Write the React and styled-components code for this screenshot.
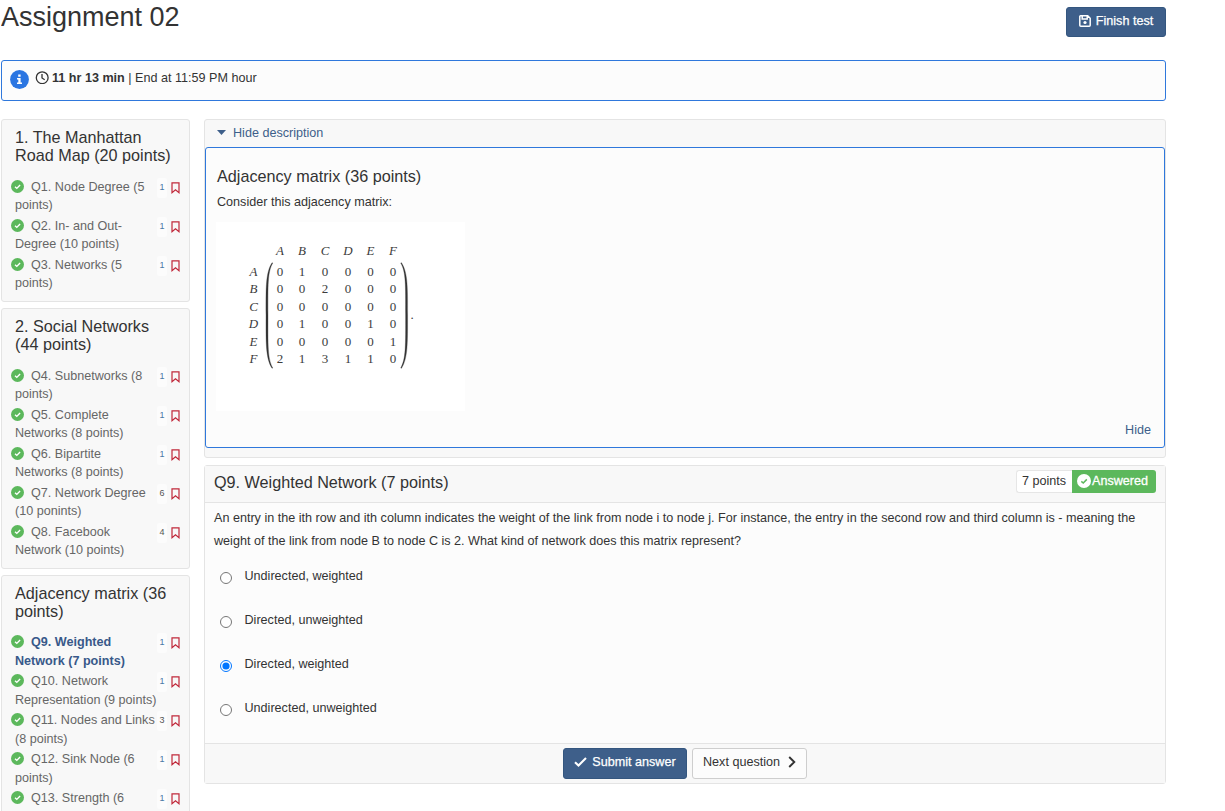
import React, { useState } from "react";
import styled, { createGlobalStyle, css } from "styled-components";

const GlobalStyle = createGlobalStyle`
  * { box-sizing: border-box; }
  body {
    margin: 0;
    background: #fff;
    color: #333;
    font: 12.6px/18px "Liberation Sans", Arial, sans-serif;
    overflow: hidden;
  }
  h1, h2, h3, p, ul { margin: 0; padding: 0; font-weight: 400; }
`;

const Page = styled.div`
  width: 1165px;
  height: 811px;
  margin-left: 1px;
  overflow: hidden;
`;

const Header = styled.header`
  display: flex;
  justify-content: space-between;
  align-items: flex-start;
  height: 60px;
`;

const PageTitle = styled.h1`
  padding-top: 2px;
  font-size: 27px;
  line-height: 30px;
`;

const Button = styled.button`
  display: flex;
  align-items: center;
  justify-content: center;
  width: ${(p) => p.$width}px;
  height: ${(p) => p.$height}px;
  padding: 0 0 3px;
  gap: ${(p) => p.$gap}px;
  border: 1px solid #cecece;
  border-radius: 3px;
  background: #fcfcfc;
  color: #333;
  font: inherit;
  white-space: nowrap;
  ${(p) =>
    p.$primary &&
    css`
      border-color: #34567f;
      background: #3e5f8a;
      color: #fff;
      -webkit-text-stroke: 0.25px #fff;
    `}
`;

const FinishSlot = styled.div`
  padding-top: 7px;
`;

const Notice = styled.div`
  display: flex;
  align-items: flex-start;
  height: 41px;
  padding: 9px 8px;
  border: 1px solid #2f78dc;
  border-radius: 3px;
  background: #fcfcfc;
`;

const ClockIcon = styled.svg`
  width: 14px;
  height: 14px;
  margin-left: 6px;
`;

const NoticeText = styled.span`
  margin: -1px 0 0 3px;
`;

const Columns = styled.div`
  display: grid;
  grid-template-columns: 189px 962px;
  column-gap: 14px;
  align-items: start;
  margin-top: 18px;
`;

const Sidebar = styled.aside`
  display: flex;
  flex-direction: column;
  gap: 6px;
`;

const SectionCard = styled.section`
  height: ${(p) => p.$height}px;
  padding: 8px 8px 0 13px;
  border: 1px solid #e4e4e4;
  border-radius: 3px;
  background: #f8f8f8;
`;

const SectionTitle = styled.h2`
  height: ${(p) => p.$height}px;
  font-size: 16.2px;
  line-height: 18px;
  white-space: nowrap;
`;

const QuestionRow = styled.div`
  display: flex;
  height: 39px;
`;

const QuestionLink = styled.a`
  width: 142px;
  white-space: nowrap;
  color: #666;
  line-height: ${(p) => p.$line}px;
  ${(p) =>
    p.$current &&
    css`
      color: #38598a;
      font-weight: 700;
    `}
`;

const StatusIcon = styled.svg`
  width: 13px;
  height: 13px;
  margin: 0 7px 0 -4px;
  vertical-align: -2px;
`;

const Count = styled.span`
  width: 10px;
  height: 20px;
  border-radius: 2px;
  background: #fcfcfc;
  color: ${(p) => (p.$single ? "#4878a6" : "#555")};
  font-size: 9px;
  line-height: 19px;
  text-align: center;
`;

const FlagIcon = styled.svg`
  width: 9px;
  height: 12px;
  margin: 4px 0 0 4px;
`;

const Main = styled.main`
  display: flex;
  flex-direction: column;
  gap: 7px;
`;

const DescriptionCard = styled.section`
  height: 339px;
  border: 1px solid #e4e4e4;
  border-radius: 3px;
  background: #f8f8f8;
`;

const Toggle = styled.div`
  display: flex;
  align-items: center;
  gap: 7px;
  height: 27px;
  padding: 0 0 2px 12px;
  color: #3e5f8a;
`;

const DescriptionBody = styled.div`
  display: flex;
  flex-direction: column;
  height: 301px;
  padding: 18px 13px 7px 11px;
  border: 1px solid #2f78dc;
  border-radius: 3px;
  background: #fcfcfc;
`;

const BodyTitle = styled.h3`
  font-size: 16.2px;
  line-height: 20px;
`;

const BodyText = styled.p`
  margin-top: 7px;
`;

const Matrix = styled.svg`
  display: block;
  width: 249px;
  height: 189px;
  margin: 11px 0 0 -1px;
  background: #fff;
`;

const HideLink = styled.a`
  align-self: flex-end;
  margin-top: 10px;
  color: #3e5f8a;
`;

const QuestionCard = styled.section`
  height: 319px;
  border: 1px solid #e4e4e4;
  border-radius: 3px;
  background: #fcfcfc;
`;

const QuestionHeader = styled.div`
  display: flex;
  justify-content: space-between;
  height: 37px;
  padding: 4px 9px 0;
  border-bottom: 1px solid #e4e4e4;
  background: #f8f8f8;
`;

const QuestionTitle = styled.h2`
  font-size: 16.2px;
  line-height: 25px;
`;

const Badges = styled.div`
  display: flex;
  height: 23px;
  line-height: 22px;
`;

const Points = styled.span`
  width: 56px;
  padding-left: 5px;
  border: 1px solid #e6e6e6;
  border-right: 0;
  border-radius: 3px 0 0 3px;
  background: #fff;
  line-height: 21px;
  white-space: nowrap;
`;

const Answered = styled.span`
  display: flex;
  align-items: center;
  gap: 1px;
  width: 84px;
  padding: 0 0 1px 5px;
  border-radius: 0 3px 3px 0;
  background: #5cb85c;
  color: #fff;
  -webkit-text-stroke: 0.3px #fff;
`;

const Prompt = styled.p`
  height: 58px;
  padding: 4px 9px 0;
  line-height: 23px;
  white-space: nowrap;
`;

const Option = styled.label`
  display: flex;
  height: 44px;
  padding: 6px 0 0 15px;
`;

const Radio = styled.input`
  width: 12px;
  height: 12px;
  margin: 4.5px 12.5px 0 0;
`;

const Footer = styled.div`
  display: flex;
  justify-content: center;
  gap: 5px;
  height: 40px;
  margin-top: 6px;
  padding-top: 4px;
  border-top: 1px solid #e4e4e4;
  background: #f8f8f8;
`;

const sections = [
  {
    title: ["1. The Manhattan", "Road Map (20 points)"],
    height: 183,
    titleHeight: 50,
    line: 18,
    items: [
      ["Q1. Node Degree (5", "points)", 1],
      ["Q2. In- and Out-", "Degree (10 points)", 1],
      ["Q3. Networks (5", "points)", 1],
    ],
  },
  {
    title: ["2. Social Networks", "(44 points)"],
    height: 261,
    titleHeight: 50,
    line: 18,
    items: [
      ["Q4. Subnetworks (8", "points)", 1],
      ["Q5. Complete", "Networks (8 points)", 1],
      ["Q6. Bipartite", "Networks (8 points)", 1],
      ["Q7. Network Degree", "(10 ponints)", 6],
      ["Q8. Facebook", "Network (10 points)", 4],
    ],
  },
  {
    title: ["Adjacency matrix (36", "points)"],
    height: 300,
    titleHeight: 49,
    line: 19,
    items: [
      ["Q9. Weighted", "Network (7 points)", 1],
      ["Q10. Network", "Representation (9 points)", 1],
      ["Q11. Nodes and Links", "(8 points)", 3],
      ["Q12. Sink Node (6", "points)", 1],
      ["Q13. Strength (6", "", 1],
    ],
  },
];

const options = [
  "Undirected, weighted",
  "Directed, unweighted",
  "Directed, weighted",
  "Undirected, unweighted",
];

const names = ["A", "B", "C", "D", "E", "F"];
const columnX = [64, 86, 109, 132, 154.5, 177];
const rowY = [53.5, 70.5, 88.5, 106, 124, 141];
const weights = ["010000", "002000", "000000", "010010", "000001", "213110"];

const CheckCircle = ({ fill = "#5cb85c", mark = "#fff" }) => (
  <>
    <circle cx="6.5" cy="6.5" r="6.5" fill={fill} />
    <path d="M4 6.8 5.8 8.4 9.1 5" fill="none" stroke={mark} strokeWidth="1.4" />
  </>
);

const AdjacencyMatrix = () => (
  <Matrix viewBox="0 0 249 189">
    <g
      fill="#3c3c3c"
      fontFamily="Liberation Serif, serif"
      fontSize="13"
      textAnchor="middle"
    >
      {names.map((n, i) => (
        <React.Fragment key={n}>
          <text x={columnX[i]} y="33" fontStyle="italic">{n}</text>
          <text x="37.5" y={rowY[i]} fontStyle="italic">{n}</text>
          {[...weights[i]].map((w, j) => (
            <text key={j} x={columnX[j]} y={rowY[i]}>{w}</text>
          ))}
        </React.Fragment>
      ))}
      <text x="196" y="97">.</text>
    </g>
    <g fill="#333" stroke="#333" strokeWidth=".3">
      <path d="M56.8 41C51.5 50 52 63 52 93C52 123 51.5 137 56.8 146L56 146.3C49.5 136 50 120 50 93C50 66 49.5 51 56 40.7Z" />
      <path d="M184.7 41C190 50 189.6 63 189.6 93C189.6 123 190 137 184.7 146L185.5 146.3C192 136 191.6 120 191.6 93C191.6 66 192 51 185.5 40.7Z" />
    </g>
  </Matrix>
);

export default function App() {
  const [selected, setSelected] = useState(2);
  return (
    <>
      <GlobalStyle />
      <Page>
        <Header>
          <PageTitle>Assignment 02</PageTitle>
          <FinishSlot>
            <Button $primary $width={100} $height={30} $gap={5}>
              <svg width="12" height="12" viewBox="0 0 12 12" fill="none" stroke="#fff" strokeWidth="1.5">
                <path d="M1.5.8h7.2l2.5 2.5v6.9a1 1 0 0 1-1 1H1.8a1 1 0 0 1-1-1V1.5a.7.7 0 0 1 .7-.7ZM3.2 1v3.1h5V1" />
                <circle cx="6" cy="7.5" r="1.6" fill="#fff" stroke="none" />
              </svg>
              Finish test
            </Button>
          </FinishSlot>
        </Header>

        <Notice>
          <svg width="19" height="19" viewBox="0 0 19 19">
            <circle cx="9.5" cy="9.5" r="9.4" fill="#2b76e2" />
            <path d="M8.2 4.6h2.4v2.2H8.2zM7 8h3.6v4.5H12V14H7v-1.5h1.3v-3H7z" fill="#fff" />
          </svg>
          <ClockIcon viewBox="0 0 14 14" fill="none" stroke="#333" strokeWidth="1.3">
            <circle cx="7.2" cy="7.7" r="5.9" />
            <path d="M7 4v4l2.7 1.7" />
          </ClockIcon>
          <NoticeText>
            <b>11 hr 13 min</b> | End at 11:59 PM hour
          </NoticeText>
        </Notice>

        <Columns>
          <Sidebar>
            {sections.map((s, si) => (
              <SectionCard key={s.title[0]} $height={s.height}>
                <SectionTitle $height={s.titleHeight}>
                  {s.title[0]}
                  <br />
                  {s.title[1]}
                </SectionTitle>
                {s.items.map(([first, second, count], i) => (
                  <QuestionRow key={first}>
                    <QuestionLink $line={s.line} $current={si === 2 && i === 0}>
                      <StatusIcon viewBox="0 0 13 13">
                        <CheckCircle />
                      </StatusIcon>
                      {first}
                      <br />
                      {second}
                    </QuestionLink>
                    <Count $single={count === 1}>{count}</Count>
                    <FlagIcon viewBox="0 0 9 12" fill="none" stroke="#c0283a" strokeWidth="1.2">
                      <path d="M1 .9h7v9.8L4.5 7.8 1 10.7Z" />
                    </FlagIcon>
                  </QuestionRow>
                ))}
              </SectionCard>
            ))}
          </Sidebar>

          <Main>
            <DescriptionCard>
              <Toggle>
                <svg width="9" height="5" viewBox="0 0 9 5">
                  <path d="M0 0h9L4.5 5Z" fill="#3e5f8a" />
                </svg>
                Hide description
              </Toggle>
              <DescriptionBody>
                <BodyTitle>Adjacency matrix (36 points)</BodyTitle>
                <BodyText>Consider this adjacency matrix:</BodyText>
                <AdjacencyMatrix />
                <HideLink>Hide</HideLink>
              </DescriptionBody>
            </DescriptionCard>

            <QuestionCard>
              <QuestionHeader>
                <QuestionTitle>Q9. Weighted Network (7 points)</QuestionTitle>
                <Badges>
                  <Points>7 points</Points>
                  <Answered>
                    <svg width="14" height="14" viewBox="0 0 13 13">
                      <CheckCircle fill="#fff" mark="#5cb85c" />
                    </svg>
                    Answered
                  </Answered>
                </Badges>
              </QuestionHeader>
              <Prompt>
                An entry in the ith row and ith column indicates the weight of the link from node i to node j. For instance, the entry in the second row and third column is - meaning the
                <br />
                weight of the link from node B to node C is 2. What kind of network does this matrix represent?
              </Prompt>
              {options.map((label, i) => (
                <Option key={label}>
                  <Radio type="radio" name="answer" checked={selected === i} onChange={() => setSelected(i)} />
                  {label}
                </Option>
              ))}
              <Footer>
                <Button $primary $width={124} $height={31} $gap={5}>
                  <svg width="13" height="10" viewBox="0 0 13 10" fill="none" stroke="#fff" strokeWidth="2.1">
                    <path d="M1 5.2 4.5 8.5 12 1" />
                  </svg>
                  Submit answer
                </Button>
                <Button $width={115} $height={31} $gap={8}>
                  Next question
                  <svg width="8" height="12" viewBox="0 0 8 12" fill="none" stroke="#333" strokeWidth="1.9">
                    <path d="M1.2 1 6.3 6 1.2 11" />
                  </svg>
                </Button>
              </Footer>
            </QuestionCard>
          </Main>
        </Columns>
      </Page>
    </>
  );
}
